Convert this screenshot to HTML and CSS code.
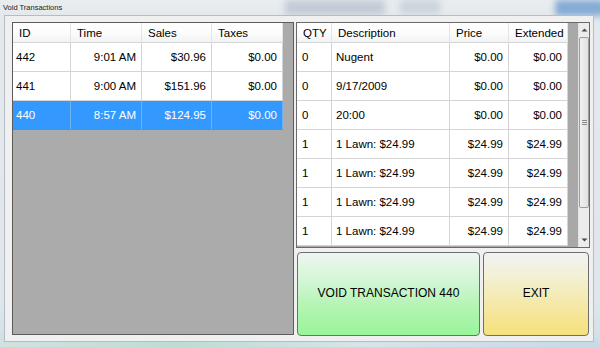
FILE: index.html
```html
<!DOCTYPE html>
<html>
<head>
<meta charset="utf-8">
<link rel="stylesheet" href="styles.css">
</head>
<body>
<div class="glass">
  <div class="blur b1"></div>
  <div class="blur b2"></div>
  <div class="blur b3"></div>
  <div class="blur b4"></div>
</div>
<div class="titlebar">Void Transactions</div>
<div class="client">
  <div class="grid left">
    <div class="table">
      <div class="row lrow head">
        <div class="c">ID</div><div class="c">Time</div><div class="c">Sales</div><div class="c">Taxes</div>
      </div>
      <div class="row lrow">
        <div class="c">442</div><div class="c r">9:01 AM</div><div class="c r">$30.96</div><div class="c r">$0.00</div>
      </div>
      <div class="row lrow">
        <div class="c">441</div><div class="c r">9:00 AM</div><div class="c r">$151.96</div><div class="c r">$0.00</div>
      </div>
      <div class="row lrow sel">
        <div class="c">440</div><div class="c r">8:57 AM</div><div class="c r">$124.95</div><div class="c r">$0.00</div>
      </div>
    </div>
  </div>
  <div class="rightcol">
    <div class="grid right">
      <div class="table rtable">
        <div class="row rrow head">
          <div class="c">QTY</div><div class="c">Description</div><div class="c">Price</div><div class="c">Extended</div>
        </div>
        <div class="row rrow"><div class="c">0</div><div class="c">Nugent</div><div class="c r">$0.00</div><div class="c r">$0.00</div></div>
        <div class="row rrow"><div class="c">0</div><div class="c">9/17/2009</div><div class="c r">$0.00</div><div class="c r">$0.00</div></div>
        <div class="row rrow"><div class="c">0</div><div class="c">20:00</div><div class="c r">$0.00</div><div class="c r">$0.00</div></div>
        <div class="row rrow"><div class="c">1</div><div class="c">1 Lawn: $24.99</div><div class="c r">$24.99</div><div class="c r">$24.99</div></div>
        <div class="row rrow"><div class="c">1</div><div class="c">1 Lawn: $24.99</div><div class="c r">$24.99</div><div class="c r">$24.99</div></div>
        <div class="row rrow"><div class="c">1</div><div class="c">1 Lawn: $24.99</div><div class="c r">$24.99</div><div class="c r">$24.99</div></div>
        <div class="row rrow"><div class="c">1</div><div class="c">1 Lawn: $24.99</div><div class="c r">$24.99</div><div class="c r">$24.99</div></div>
      </div>
      <div class="strip"></div>
      <div class="scroll">
        <div class="arrow up"><svg width="7" height="4" viewBox="0 0 7 4"><path d="M0.5 3.5 L3.5 0.5 L6.5 3.5 Z" fill="#4a4a4a"/></svg></div>
        <div class="thumb"><span class="grip"></span></div>
        <div class="track"></div>
        <div class="arrow down"><svg width="7" height="4" viewBox="0 0 7 4"><path d="M0.5 0.5 L3.5 3.5 L6.5 0.5 Z" fill="#4a4a4a"/></svg></div>
      </div>
    </div>
    <div class="buttons">
      <button class="btn void">VOID TRANSACTION 440</button>
      <button class="btn exit">EXIT</button>
    </div>
  </div>
</div>
</body>
</html>
```
FILE: styles.css
```css
html, body {
  margin: 0;
  padding: 0;
}
body {
  width: 600px;
  height: 347px;
  overflow: hidden;
  position: relative;
  font-family: "Liberation Sans", Arial, sans-serif;
  background: linear-gradient(to bottom, #e9edf0 0px, #e4e9ed 15px, #dfe6ec 300px, #cfe0e4 347px);
}
.glass {
  position: absolute;
  left: 0; top: 0; width: 600px; height: 347px;
  overflow: hidden;
}
.blur {
  position: absolute;
  filter: blur(3px);
}
.b1 { left: 285px; top: 0; width: 100px; height: 15px; background: #c3ccd6; }
.b2 { left: 400px; top: 0; width: 40px; height: 14px; background: #ccd4dc; }
.b3 { left: 555px; top: 0; width: 50px; height: 16px; background: #86abd4; }
.b4 { left: 0; top: 340px; width: 600px; height: 10px; background: linear-gradient(to right, #cfe3e0, #b8dcd0 30%, #d4e6ea 60%, #c4d8e8); }

.titlebar {
  position: relative;
  height: 15px;
  padding-left: 3px;
  font-family: "Liberation Sans", Arial, sans-serif;
  font-size: 7.5px;
  line-height: 16px;
  color: #1a1a1a;
}
.client {
  position: relative;
  margin: 0 6px 0 4px;
  border: 1px solid #b4bcc4;
  background: #f0f0f0;
  box-sizing: border-box;
  height: 327px;
  padding: 6px 3px 0 7px;
  display: flex;
  gap: 2px;
  align-items: flex-start;
}
.grid {
  border: 1px solid #5c5c5c;
  background: #ababab;
  box-sizing: border-box;
  overflow: hidden;
}
.left {
  width: 282px;
  height: 313px;
}
.rightcol {
  width: 294px;
  display: flex;
  flex-direction: column;
  gap: 4px;
}
.right {
  height: 226px;
  display: flex;
  border-color: #6a6a6a;
}
.table {
  font-size: 11.5px;
  color: #000;
}
.row {
  display: grid;
  background: #fff;
}
.lrow { grid-template-columns: 58px 71px 70px 71px; width: 270px; }
.rrow { grid-template-columns: 35px 118px 59px 59px; width: 271px; }
.row .c {
  height: 28px;
  line-height: 28px;
  border-right: 1px solid #d4d4d4;
  border-bottom: 1px solid #d4d4d4;
  padding: 0 4px;
  white-space: nowrap;
  overflow: hidden;
}
.row .c:first-child { padding-left: 3px; }
.row .c.r { text-align: right; padding-right: 5px; }
.row.head .c {
  height: 19px;
  line-height: 20px;
  padding-left: 6px;
  font-size: 11.5px;
  background: linear-gradient(to bottom, #ffffff, #fbfbfc 60%, #f1f2f4);
  border-right: 1px solid #e4e4e4;
  border-bottom: 1px solid #d6d6d6;
}
.row.sel { background: #3399ff; color: #fff; }
.row.sel .c { border-right-color: #6fb0f0; border-bottom-color: #3399ff; }
.rtable { flex: none; }
.rrow .c:first-child { padding-left: 5px; }
.rrow.head .c:first-child { padding-left: 6px; }
.strip { flex: 1; background: #a8a8a8; }
.scroll {
  width: 11px;
  display: flex;
  flex-direction: column;
  background: #ececec;
  border-left: 1px solid #e2e2e2;
  box-sizing: border-box;
}
.arrow {
  height: 14px;
  display: flex;
  align-items: center;
  justify-content: center;
  flex: none;
}
.thumb {
  height: 171px;
  flex: none;
  border: 1px solid #9c9c9c;
  border-radius: 2px;
  background: linear-gradient(to right, #f1f1f1, #e0e0e0);
  box-sizing: border-box;
  display: flex;
  align-items: center;
  justify-content: center;
}
.grip {
  width: 5px;
  height: 5px;
  background: repeating-linear-gradient(to bottom, #8a8a8a 0 1px, transparent 1px 2px);
}
.track { flex: 1; }
.buttons {
  display: flex;
  gap: 3px;
  height: 84px;
  padding-left: 1px;
}
.btn {
  font-family: "Liberation Sans", Arial, sans-serif;
  font-size: 12px;
  color: #000;
  border: 1px solid #6e6e6e;
  border-radius: 4px;
  height: 84px;
  padding: 0 0 3px 0;
  margin: 0;
}
.void {
  width: 183px;
  background: linear-gradient(to bottom, #eef6f2 0%, #d6f6d8 30%, #b4f4b4 65%, #9af59a 100%);
}
.exit {
  width: 106px;
  background: linear-gradient(to bottom, #f1f3f5 0%, #f3efcc 35%, #f5e8a4 65%, #f5e17c 100%);
}
```
